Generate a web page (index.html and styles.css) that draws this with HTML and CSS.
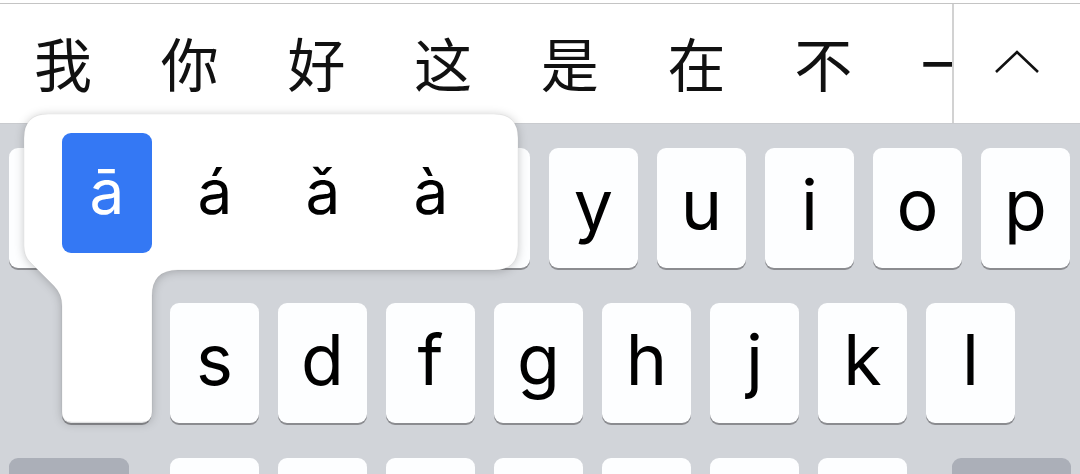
FILE: index.html
```html
<!DOCTYPE html>
<html lang="zh">
<head>
<meta charset="utf-8">
<link rel="stylesheet" href="styles.css">
</head>
<body>
<div class="app">
  <div class="cand-bar">
    <div class="cands">
      <span class="cand">我</span>
      <span class="cand">你</span>
      <span class="cand">好</span>
      <span class="cand">这</span>
      <span class="cand">是</span>
      <span class="cand">在</span>
      <span class="cand">不</span>
      <span class="cand">一</span>
    </div>
    <div class="divider"></div>
    <div class="expand">
      <svg width="48" height="28" viewBox="0 0 48 28"><path d="M3 24 L24 4 L45 24" fill="none" stroke="#111" stroke-width="2.6"/></svg>
    </div>
  </div>
  <div class="kb">
    <div class="row r1">
      <div class="key">q</div><div class="key">w</div><div class="key">e</div><div class="key">r</div><div class="key">t</div>
      <div class="key">y</div><div class="key">u</div><div class="key">i</div><div class="key">o</div><div class="key">p</div>
    </div>
    <div class="row r2">
      <div class="key">a</div><div class="key">s</div><div class="key">d</div><div class="key">f</div><div class="key">g</div>
      <div class="key">h</div><div class="key">j</div><div class="key">k</div><div class="key">l</div>
    </div>
    <div class="row r3">
      <div class="key dark shift"></div>
      <div class="letters">
        <div class="key">z</div><div class="key">x</div><div class="key">c</div><div class="key">v</div>
        <div class="key">b</div><div class="key">n</div><div class="key">m</div>
      </div>
      <div class="key dark back"></div>
    </div>
  </div>
  <div class="popup">
    <svg class="bubble" width="494" height="308" viewBox="0 0 494 308">
      <path d="M24 0 H470 Q494 0 494 24 V132 Q494 156 470 156 H154 Q128 156 128 182 V298 Q128 308 118 308 H48 Q38 308 38 298 V192 Q38 180 30 172 L6 148 Q0 142 0 132 V24 Q0 0 24 0 Z" fill="#fff" stroke="rgba(0,0,0,0.06)" stroke-width="1"/>
    </svg>
    <div class="options">
      <div class="opt sel">ā</div>
      <div class="opt">á</div>
      <div class="opt">ǎ</div>
      <div class="opt">à</div>
    </div>
  </div>
</div>
</body>
</html>
```

FILE: styles.css
```css
html, body {
  margin: 0;
  padding: 0;
  background: #d1d4d9;
}
.app {
  position: relative;
  width: 1080px;
  height: 474px;
  overflow: hidden;
  background: #d1d4d9;
}
.cand-bar {
  display: flex;
  height: 120px;
  background: #fff;
  border-top: 3px solid #fff;
  box-shadow: inset 0 1px 0 #c4c4c4;
  border-bottom: 1px solid #c9cbcf;
}
.cands {
  width: 952px;
  overflow: hidden;
  display: flex;
  align-items: center;
  gap: 68.7px;
  padding-left: 34px;
  box-sizing: border-box;
  white-space: nowrap;
}
.cand {
  flex: none;
  width: 58px;
  font-family: "Noto Sans CJK SC", sans-serif;
  font-size: 58px;
  line-height: 1;
  color: #111;
  position: relative;
  top: -1px;
}
.divider {
  width: 2px;
  margin-top: 1px;
  background: #d2d2d2;
}
.expand {
  flex: 1;
  display: flex;
  align-items: center;
  justify-content: center;
  padding-bottom: 2px;
}
.kb {
  display: flex;
  flex-direction: column;
  gap: 35px;
  padding-top: 24px;
}
.row {
  display: flex;
  gap: 19px;
  padding: 0 9px;
}
.r2 {
  padding-left: 62px;
}
.r3 {
  gap: 0;
}
.key {
  flex: none;
  width: 89px;
  height: 120px;
  background: #fdfeff;
  border-radius: 9px;
  box-shadow: 0 2px 0 #8b8c90;
  font-family: Inter, "Liberation Sans", sans-serif;
  font-size: 70px;
  line-height: 114px;
  text-align: center;
  color: #000;
}
.letters {
  display: flex;
  gap: 19px;
  margin-left: 41px;
  margin-right: 45px;
}
.key.dark {
  background: #abafb8;
}
.shift {
  width: 120px;
}
.back {
  width: 119px;
}
.popup {
  position: absolute;
  left: 24px;
  top: 114px;
  width: 494px;
  height: 308px;
}
.bubble {
  position: absolute;
  left: 0;
  top: 0;
  filter: drop-shadow(0 1px 5px rgba(0, 0, 0, 0.22));
}
.options {
  position: absolute;
  left: 38px;
  top: 19px;
  display: flex;
  gap: 18px;
}
.opt {
  width: 90px;
  height: 120px;
  border-radius: 9px;
  font-family: Inter, "Liberation Sans", sans-serif;
  font-size: 62px;
  line-height: 118px;
  text-align: center;
  color: #000;
}
.opt.sel {
  background: #3478f4;
  color: #fff;
}
```
